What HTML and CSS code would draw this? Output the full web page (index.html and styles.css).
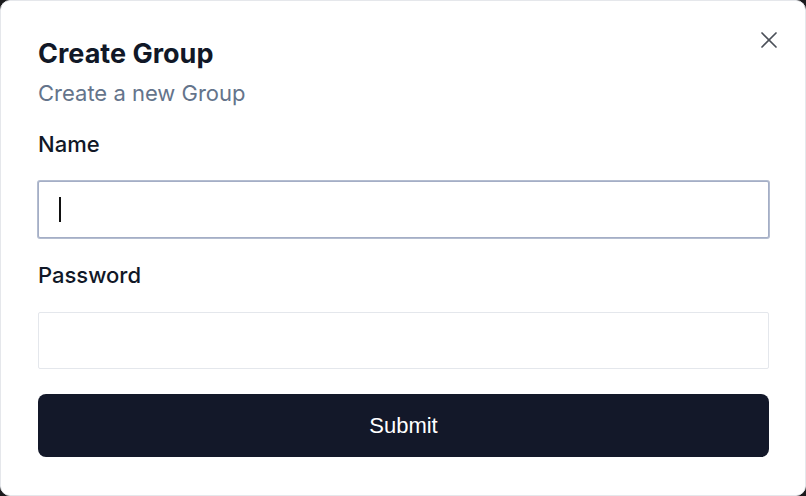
FILE: index.html
```html
<!DOCTYPE html>
<html>
<head>
<meta charset="utf-8">
<link rel="stylesheet" href="styles.css">
</head>
<body>
<div class="dialog">
  <button class="close" aria-label="Close">
    <svg width="18" height="18" viewBox="0 0 18 18" fill="none" stroke="currentColor" stroke-width="1.7" stroke-linecap="round"><path d="M16 2 2 16"/><path d="M2 2 16 16"/></svg>
  </button>
  <header class="head">
    <h2 class="title">Create Group</h2>
    <p class="desc">Create a new Group</p>
  </header>
  <form class="form">
    <div class="field">
      <label class="label">Name</label>
      <div class="input focused"><span class="caret"></span></div>
    </div>
    <div class="field">
      <label class="label">Password</label>
      <div class="input"></div>
    </div>
    <button type="button" class="submit">Submit</button>
  </form>
</div>
</body>
</html>
```

FILE: styles.css
```css
* { box-sizing: border-box; }
html, body { margin: 0; padding: 0; }
body {
  background: #1b1b1d;
  width: 806px;
  height: 496px;
  font-family: Inter, "Liberation Sans", sans-serif;
  overflow: hidden;
}
.dialog {
  position: relative;
  width: 806px;
  height: 496px;
  background: #ffffff;
  border-radius: 10px;
  border: 1px solid #e5e7eb;
  padding: 36px 36px 0 37px;
}
.close {
  position: absolute;
  top: 30px;
  right: 27px;
  width: 18px;
  height: 18px;
  padding: 0;
  border: 0;
  background: none;
  color: #4b5059;
  display: flex;
}
.head { display: flex; flex-direction: column; gap: 7px; }
.title {
  margin: 0;
  font-size: 27px;
  line-height: 34px;
  font-weight: 700;
  color: #111827;
}
.desc {
  margin: 0;
  font-size: 22px;
  line-height: 30px;
  color: #64748b;
}
.form {
  margin-top: 22px;
  display: flex;
  flex-direction: column;
  gap: 23px;
}
.field { display: flex; flex-direction: column; gap: 23px; }
.label {
  font-size: 22px;
  line-height: 28px;
  font-weight: 500;
  color: #111827;
}
.input {
  height: 57px;
  border: 1px solid #e4e7ec;
  border-radius: 2px;
  background: #fff;
  display: flex;
  align-items: center;
  padding-left: 20px;
}
.input.focused {
  border-color: #a4aec6;
  box-shadow: 0 0 0 1px #b4bdd0;
}
.caret {
  width: 2px;
  height: 25px;
  background: #111;
}
.submit {
  margin-top: 2px;
  height: 63px;
  border: 0;
  border-radius: 8px;
  background: #131829;
  color: #fff;
  font-family: "Liberation Sans", Arial, sans-serif;
  font-size: 22px;
  cursor: pointer;
}
```
